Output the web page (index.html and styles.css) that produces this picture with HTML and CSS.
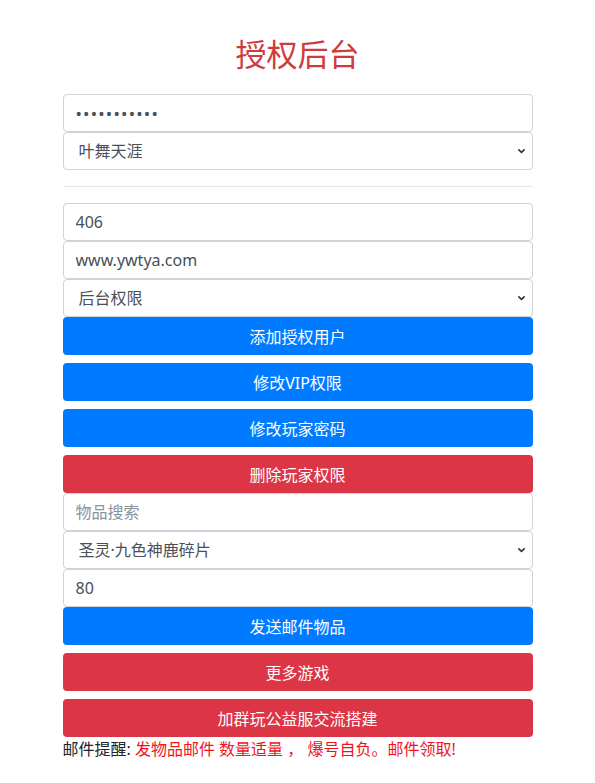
FILE: index.html
```html
<!DOCTYPE html>
<html lang="zh-CN">
<head>
  <meta charset="UTF-8">
  <meta name="viewport" content="width=device-width,initial-scale=1">
  <title>授权后台</title>
  <link rel="stylesheet" href="styles.css">
</head>
<body>
  <main class="panel">
    <h1 class="title">授权后台</h1>

    <input class="field secret" type="password" value="12345678901">
    <select class="field pick">
      <option>叶舞天涯</option>
    </select>

    <hr class="rule">

    <input class="field" type="text" value="406">
    <input class="field" type="text" value="www.ywtya.com">
    <select class="field pick">
      <option>后台权限</option>
    </select>

    <button class="btn blue">添加授权用户</button>
    <button class="btn blue">修改VIP权限</button>
    <button class="btn blue">修改玩家密码</button>
    <button class="btn red">删除玩家权限</button>

    <input class="field" type="text" placeholder="物品搜索">
    <select class="field pick">
      <option>圣灵·九色神鹿碎片</option>
    </select>
    <input class="field" type="text" value="80">

    <button class="btn blue">发送邮件物品</button>
    <button class="btn red">更多游戏</button>
    <button class="btn red">加群玩公益服交流搭建</button>

    <p class="note">邮件提醒: <span class="warn">发物品邮件 数量适量 ， 爆号自负。邮件领取!</span></p>
  </main>
</body>
</html>
```

FILE: styles.css
```css
* { box-sizing: border-box; }
body {
  margin: 0;
  background: #fff;
  color: #212529;
  font-family: "Noto Sans", "Noto Sans CJK SC", sans-serif;
  font-size: 16px;
}
.panel {
  width: 470px;
  margin: 0 auto;
  display: flex; flex-direction: column;
}
.title {
  margin: 34px 0 22px;
  font-size: 31px; font-weight: 400; line-height: 38px;
  text-align: center;
  color: #cf3a3e;
  font-family: "Noto Sans CJK SC", sans-serif;
}
.field {
  display: block; width: 100%; height: 38px;
  margin: 0;
  padding: 0 12px;
  font: inherit; font-size: 16px;
  color: #495057;
  background: #fff;
  border: 1px solid #ced4da; border-radius: 4px;
  outline: none;
}
.field::placeholder { color: #8a939b; }
.secret { letter-spacing: 1.2px; font-size: 17px; }
.pick {
  appearance: none; -webkit-appearance: none;
  padding-left: 15px;
  background-image: url("data:image/svg+xml,%3Csvg xmlns='http://www.w3.org/2000/svg' width='10' height='6' viewBox='0 0 10 6'%3E%3Cpath d='M1.5 1.2 5 4.6 8.5 1.2' fill='none' stroke='%23333' stroke-width='1.8'/%3E%3C/svg%3E");
  background-repeat: no-repeat;
  background-position: right 6px center;
  background-size: 9px 6px;
}
.rule {
  width: 100%;
  margin: 16px 0;
  border: 0; border-top: 1px solid #e6e8ea;
}
.btn {
  display: block; width: 100%; height: 38px;
  margin: 0 0 8px;
  border: 1px solid transparent; border-radius: 4px;
  font: inherit; font-size: 16px;
  color: #fff;
  cursor: pointer;
}
.btn.blue { background: #007bff; }
.btn.red { background: #dc3545; }
.btn:nth-of-type(4), .btn:last-of-type { margin-bottom: 0; }
.note {
  margin: 0;
  line-height: 24px;
  font-size: 16px;
  color: #212529;
}
.warn { color: #f0141e; }
```
